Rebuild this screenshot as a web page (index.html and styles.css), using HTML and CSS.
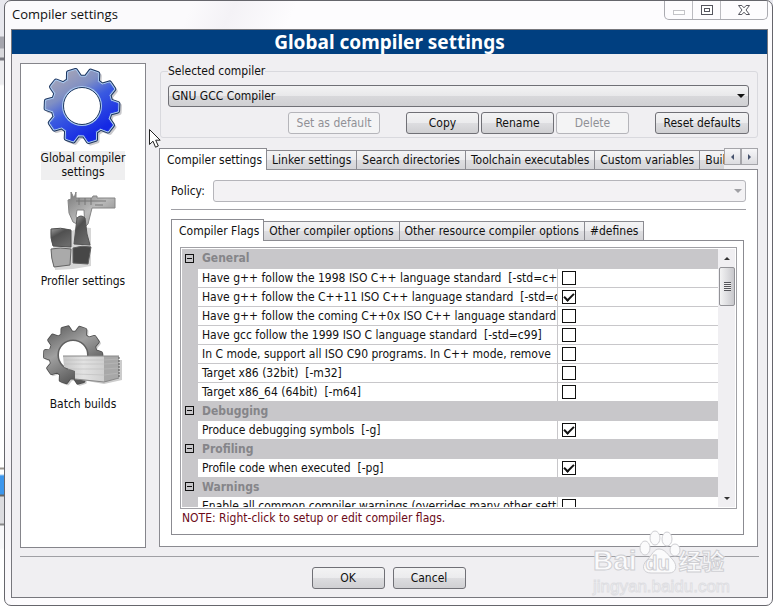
FILE: index.html
```html
<!DOCTYPE html>
<html lang="en">
  <head>
    <meta charset="UTF-8" />
    <meta name="viewport" content="width=device-width, initial-scale=1.0" />
    <title>Compiler settings</title>
    <link rel="stylesheet" href="styles.css">
  </head>

  <body>
    <div class="window">
      <div class="title-bar">
        <div class="title">Compiler settings</div>
        <div class="window-buttons">
          <button class="window-button" aria-label="Minimize" disabled>
            <svg width="14" height="16" viewBox="0 0 14 16"><rect x="1.5" y="8.5" width="11" height="4" fill="#fff" stroke="#c4c4c8" /></svg>
          </button>
          <button class="window-button" aria-label="Maximize">
            <svg width="14" height="16" viewBox="0 0 14 16"><g fill="#fff" stroke="#55555e"><rect x="1.5" y="3.5" width="11" height="9" /><rect x="4.5" y="6.5" width="5" height="3" /></g></svg>
          </button>
          <button class="window-button close" aria-label="Close">
            <svg width="14" height="16" viewBox="0 0 14 16"><path d="M1.500 3.500h3.400L7 5.800l2.100-2.300h3.400L9 8l3.500 4.500H9.100L7 10.200 4.900 12.500H1.500L5 8z" fill="#fff" stroke="#55555e" /></svg>
          </button>
        </div>
      </div>

      <div class="client">
        <h1 class="banner">Global compiler settings</h1>
        <div class="main">
          <ul class="categories">
            <li>
              <a class="category selected" href="#global">
                <svg width="80" height="80" viewBox="-39 -39 80 80">
                  <defs>
                    <linearGradient id="blue" gradientUnits="userSpaceOnUse" x1="-20" y1="-32" x2="14" y2="26">
                      <stop offset="0" stop-color="#a4a4b8" />
                      <stop offset="0.3" stop-color="#7f8fc4" />
                      <stop offset="0.55" stop-color="#3a5ae0" />
                      <stop offset="1" stop-color="#1428e4" />
                    </linearGradient>
                    <linearGradient id="grey" gradientUnits="userSpaceOnUse" x1="-20" y1="-32" x2="14" y2="26">
                      <stop offset="0" stop-color="#6c6c6c" />
                      <stop offset="0.4" stop-color="#a0a0a0" />
                      <stop offset="1" stop-color="#585858" />
                    </linearGradient>
                    <path id="gear" stroke-linejoin="round" d="M4-28.700 8.700-34.900 15.800-32.400 15.400-24.600 20.100-20.900 27.600-23.100 31.800-16.900 26.900-10.900 28.600-5 35.900-2.500 35.600 5 28.100 7 26.100 12.700 30.500 19.100 25.900 25 18.600 22.200 13.600 25.600 13.500 33.400 6.300 35.500 2 28.900-4 28.700-8.700 34.900-15.800 32.400-15.400 24.600-20.100 20.900-27.600 23.100-31.800 16.900-26.900 10.900-28.600 5-35.900 2.500-35.600-5-28.100-7-26.100-12.700-30.500-19.100-25.900-25-18.600-22.200-13.600-25.600-13.500-33.400-6.300-35.500-2-28.900z" />
                  </defs>
                  <use href="#gear" x="2" y="2" fill="#c8c8cc" stroke="#c8c8cc" stroke-width="4" />
                  <use href="#gear" fill="#1c3560" stroke="#1c3560" stroke-width="5" />
                  <use href="#gear" fill="#a9c8ee" stroke="#a9c8ee" stroke-width="3" />
                  <use href="#gear" fill="url(#blue)" stroke="url(#blue)" stroke-width="1" />
                  <circle r="20" fill="#a9c8ee" />
                  <circle r="18.500" fill="#fff" stroke="#1c3560" />
                </svg>
                <span>Global compiler<br />settings</span>
              </a>
            </li>
            <li>
              <a class="category" href="#profiler">
                <svg width="80" height="80" viewBox="0 0 80 80">
                  <defs>
                    <linearGradient id="steel" x1="0" y1="0" x2="1" y2="1">
                      <stop offset="0" stop-color="#777" />
                      <stop offset="0.5" stop-color="#bbb" />
                      <stop offset="1" stop-color="#808080" />
                    </linearGradient>
                    <linearGradient id="dark" x1="0" y1="0" x2="0.6" y2="1">
                      <stop offset="0" stop-color="#a0a0a0" />
                      <stop offset="0.4" stop-color="#505050" />
                      <stop offset="1" stop-color="#6a6a6a" />
                    </linearGradient>
                  </defs>
                  <path d="M9 40l20 1 8-4 11 1v38l-18 3-18 1z" fill="#d6d6d6" />
                  <path d="M28 2l3 6 2-6v6h16l1-2h4v2h18v10H49l-4 16-3 3-1-17H34l-1 6 3 9-6-3-4-9-1-13 3-1z" fill="url(#steel)" stroke="#858585" />
                  <path d="M33 11h30M52 15h8M36 8v7M42 8v7M48 8v7" stroke="#777" fill="none" />
                  <path d="M34 28q4-4 8 0l2 16 3 11-16-1z" fill="url(#dark)" stroke="#555" />
                  <path d="M8 39q9-2 20 1v17l-18-1q-3-8-2-17z" fill="url(#dark)" stroke="#505050" />
                  <path d="M8 59q9-2 20 0l-1 16-16 2q-3-9-3-18z" fill="#aaa" stroke="#646464" />
                  <path d="M30 58q9-3 18-1l-3 17-15-1z" fill="#474747" stroke="#606060" />
                </svg>
                <span>Profiler settings</span>
              </a>
            </li>
            <li>
              <a class="category" href="#batch">
                <svg width="80" height="80" viewBox="0 0 80 80">
                  <defs>
                    <linearGradient id="paper" x1="0" y1="0" x2="1" y2="0">
                      <stop offset="0" stop-color="#c6c6c6" />
                      <stop offset="0.5" stop-color="#e2e2e2" />
                      <stop offset="1" stop-color="#cfcfcf" />
                    </linearGradient>
                  </defs>
                  <g transform="translate(30 42) scale(0.780)">
                    <use href="#gear" x="2" y="2" fill="#ccc" stroke="#ccc" stroke-width="4" />
                    <use href="#gear" fill="#4c4c4c" stroke="#4c4c4c" stroke-width="5" />
                    <use href="#gear" fill="url(#grey)" stroke="url(#grey)" stroke-width="3" />
                    <circle r="19" fill="#fff" stroke="#606060" stroke-width="2" />
                  </g>
                  <path d="M33 66l28 5 18-4v-20h-3z" fill="#ccc" />
                  <path d="M20 43h41v25l-29-2v-8l-11-4z" fill="url(#paper)" />
                  <path d="M61 43h15v22l-15 4z" fill="#a8a8a8" />
                  <path d="M21 47h40l15-1M21 51h40l15-1M25 56h36l15-1M32 61l29 1 15-2" fill="none" stroke="#bcbcbc" stroke-width="0.600" />
                  <path d="M20 43h56M32 66l29 3 15-4" fill="none" stroke="#888" />
                  <path d="M76 44v21" fill="none" stroke="#555" stroke-dasharray="2 1" />
                </svg>
                <span>Batch builds</span>
              </a>
            </li>
          </ul>

          <div class="settings">
            <fieldset class="compiler">
              <legend><label for="compiler">Selected compiler</label></legend>
              <div class="combo">
                <select id="compiler"><option>GNU GCC Compiler</option></select>
              </div>
              <div class="compiler-actions">
                <button class="button default" disabled>Set as default</button>
                <button class="button">Copy</button>
                <button class="button">Rename</button>
                <button class="button" disabled>Delete</button>
                <button class="button reset">Reset defaults</button>
              </div>
            </fieldset>

            <div class="tab-row">
              <div class="tabs" role="tablist">
                <button class="tab active" role="tab">Compiler settings</button>
                <button class="tab" role="tab">Linker settings</button>
                <button class="tab" role="tab">Search directories</button>
                <button class="tab" role="tab">Toolchain executables</button>
                <button class="tab" role="tab">Custom variables</button>
                <button class="tab" role="tab">Build options</button>
              </div>
              <button class="tab-scroll" aria-label="Previous tabs"><span class="arrow left"></span></button>
              <button class="tab-scroll" aria-label="Next tabs"><span class="arrow right"></span></button>
            </div>

            <div class="panel">
              <div class="policy">
                <label for="policy">Policy:</label>
                <div class="combo disabled"><select id="policy" disabled></select></div>
              </div>
              <hr />
              <div class="tabs inner" role="tablist">
                <button class="tab active" role="tab">Compiler Flags</button>
                <button class="tab" role="tab">Other compiler options</button>
                <button class="tab" role="tab">Other resource compiler options</button>
                <button class="tab" role="tab">#defines</button>
              </div>
              <div class="flags-panel">
                <div class="flags">
                  <div class="flags-view">
                    <table>
                      <colgroup><col class="col-gutter" /><col class="col-name" /><col /></colgroup>
                      <tr class="group"><td><button class="toggle" aria-label="Collapse General"></button></td><th colspan="2">General</th></tr>
                      <tr><td></td><td><label for="f1">Have g++ follow the 1998 ISO C++ language standard&nbsp; [-std=c++98]</label></td><td><input id="f1" type="checkbox" /></td></tr>
                      <tr><td></td><td><label for="f2">Have g++ follow the C++11 ISO C++ language standard&nbsp; [-std=c++11]</label></td><td><input id="f2" type="checkbox" checked /></td></tr>
                      <tr><td></td><td><label for="f3">Have g++ follow the coming C++0x ISO C++ language standard&nbsp; [-std=c++0x]</label></td><td><input id="f3" type="checkbox" /></td></tr>
                      <tr><td></td><td><label for="f4">Have gcc follow the 1999 ISO C language standard&nbsp; [-std=c99]</label></td><td><input id="f4" type="checkbox" /></td></tr>
                      <tr><td></td><td><label for="f5">In C mode, support all ISO C90 programs. In C++ mode, remove</label></td><td><input id="f5" type="checkbox" /></td></tr>
                      <tr><td></td><td><label for="f6">Target x86 (32bit)&nbsp; [-m32]</label></td><td><input id="f6" type="checkbox" /></td></tr>
                      <tr><td></td><td><label for="f7">Target x86_64 (64bit)&nbsp; [-m64]</label></td><td><input id="f7" type="checkbox" /></td></tr>
                      <tr class="group"><td><button class="toggle" aria-label="Collapse Debugging"></button></td><th colspan="2">Debugging</th></tr>
                      <tr><td></td><td><label for="f8">Produce debugging symbols&nbsp; [-g]</label></td><td><input id="f8" type="checkbox" checked /></td></tr>
                      <tr class="group"><td><button class="toggle" aria-label="Collapse Profiling"></button></td><th colspan="2">Profiling</th></tr>
                      <tr><td></td><td><label for="f9">Profile code when executed&nbsp; [-pg]</label></td><td><input id="f9" type="checkbox" checked /></td></tr>
                      <tr class="group"><td><button class="toggle" aria-label="Collapse Warnings"></button></td><th colspan="2">Warnings</th></tr>
                      <tr><td></td><td><label for="f10">Enable all common compiler warnings (overrides many other settings)</label></td><td><input id="f10" type="checkbox" /></td></tr>
                    </table>
                  </div>
                  <div class="scrollbar">
                    <button class="scroll-button" aria-label="Scroll up"><span class="arrow up"></span></button>
                    <div class="thumb"><span class="grip"></span></div>
                    <button class="scroll-button" aria-label="Scroll down"><span class="arrow down"></span></button>
                  </div>
                </div>
                <p class="note">NOTE: Right-click to setup or edit compiler flags.</p>
              </div>
            </div>
          </div>
        </div>
        <hr class="footer-line" />
        <div class="footer">
          <button class="button">OK</button>
          <button class="button">Cancel</button>
        </div>
      </div>
    </div>

    <svg class="pointer" width="14" height="22" viewBox="0 0 14 22"><path d="M1.500 1.500v15l3.500-3.300 2.500 6 2.800-1.200-2.600-5.800h4.500z" fill="#fff" stroke="#222" /></svg>

    <div class="watermark">
      <svg width="42" height="44" viewBox="0 0 42 44"><g fill="#fbfbfc" stroke="#cfcfd3"><ellipse cx="16" cy="8" rx="5" ry="7" /><ellipse cx="28" cy="9" rx="5" ry="7" /><ellipse cx="6" cy="18" rx="5" ry="7" /><ellipse cx="36" cy="20" rx="5" ry="6" /><path d="M20 19c6 0 9 6 14 11 5 6 3 13-4 13H12c-8 0-10-7-4-13 5-5 7-11 12-11z" /></g></svg>
      <div class="brand"><span>Bai</span><span class="du">du</span><span lang="zh" class="cjk">经验</span></div>
      <div class="site">jingyan.baidu.com</div>
    </div>
  </body>
</html>
```

FILE: styles.css
```css
* {
  box-sizing: border-box;
}

body {
  margin: 0;
  height: 100vh;
  padding: 0 0 7px 4px;
  overflow: hidden;
  position: relative;
  font-family: "DejaVu Sans Condensed", "DejaVu Sans", sans-serif;
  font-stretch: condensed;
  font-size: 12px;
  line-height: 14px;
  color: #111;
  background: linear-gradient(
    to bottom,
    #e8e8ee 0 36px,
    #a5a5ad 37px 48px,
    #d8d8dc 49px 57px,
    #77777f 58px 60px,
    #ededf0 61px 84px,
    #fff 86px 467px,
    #9a9590 468px 469px,
    #fff 470px 474px,
    #3d96ec 476px 494px,
    #666 495px 496px,
    #dcdce0 497px 523px,
    #888 524px 525px,
    #f8f8fa 526px 548px,
    #fff 550px
  );
}

button,
select {
  font: inherit;
  color: inherit;
}

.window {
  height: 100%;
  display: flex;
  flex-direction: column;
  padding: 0 4px 7px 6px;
  border: 1px solid #66666c;
  border-radius: 7px;
  background: linear-gradient(115deg, #fbfafc 0 18%, #f4f2f6 22%, #fdfcfe 28% 100%);
}

.title-bar {
  height: 28px;
  display: flex;
  justify-content: space-between;
}

.title {
  padding: 5px 1px;
  font-family: "Open Sans", "Noto Sans", sans-serif;
  font-stretch: normal;
  font-size: 13px;
  line-height: 16px;
}

.window-buttons {
  display: flex;
  height: 19px;
  border: 1px solid #aaaab0;
  border-top: 0;
  border-radius: 0 0 5px 5px;
}

.window-button {
  width: 28px;
  padding: 0;
  border: 0;
  border-right: 1px solid #bbbbc0;
  background: none;
}

.window-button.close {
  width: 46px;
  border-right: 0;
}

.window-button svg {
  display: block;
  margin: auto;
}

.client {
  flex: 1;
  min-height: 0;
  display: flex;
  flex-direction: column;
  border: 1px solid #77777d;
  background: #f0eff2;
}

.banner {
  margin: 0;
  height: 24px;
  font-family: "Noto Sans", "Open Sans", sans-serif;
  font-stretch: normal;
  font-size: 19px;
  line-height: 24px;
  text-align: center;
  color: #fff;
  background: #003f80;
}

.main {
  flex: 1;
  min-height: 0;
  display: flex;
  gap: 14px;
  padding: 9px 9px 8px 8px;
}

.categories {
  width: 126px;
  margin: 0;
  padding: 3px 0;
  list-style: none;
  border: 1px solid #85858b;
  background: #fff;
}

.category {
  display: flex;
  flex-direction: column;
  align-items: center;
  gap: 4px;
  min-height: 123px;
  text-align: center;
  color: inherit;
  text-decoration: none;
}

.category span {
  padding-bottom: 1px;
}

.selected span {
  background: #efeff0;
}

.settings {
  flex: 1;
  min-width: 0;
  display: flex;
  flex-direction: column;
  padding: 1px 0;
}

.compiler {
  min-width: 0;
  margin: 0;
  padding: 7px 8px 3px 7px;
  border: 1px solid #d9d9de;
  border-radius: 3px;
}

.compiler legend {
  padding: 0;
}

.combo {
  display: grid;
  align-items: center;
}

.combo select {
  grid-area: 1 / 1;
  height: 22px;
  padding: 0 3px;
  appearance: none;
  border: 1px solid #707076;
  border-radius: 3px;
  color: #111;
  background: linear-gradient(#f3f3f4, #e8e8ea 50%, #d8d8db 51%, #d0d0d3);
}

.combo::after {
  content: "";
  grid-area: 1 / 1;
  justify-self: end;
  margin-right: 4px;
  border: 4px solid transparent;
  border-top-color: #111;
  border-bottom: 0;
  pointer-events: none;
}

.combo.disabled select {
  border-color: #b5b5ba;
  background: #f3f2f4;
  opacity: 1;
}

.combo.disabled::after {
  border-top-color: #a0a0a4;
}

.compiler-actions {
  display: flex;
  justify-content: flex-end;
  gap: 2px;
  padding: 5px 0 0;
}

.button {
  width: 73px;
  height: 22px;
  padding: 0;
  border: 1px solid #707076;
  border-radius: 3px;
  background: linear-gradient(#f3f3f4, #ebebed 50%, #dddde0 51%, #cfcfd2);
}

.button:disabled {
  color: #909096;
  border-color: #b5b5ba;
  background: #f4f4f5;
}

.button.default {
  width: 92px;
  margin-right: 24px;
}

.button.reset {
  width: 94px;
  margin-left: 24px;
}

.tab-row {
  display: flex;
  margin: 10px 0 0 -1px;
}

.tabs {
  flex: 1;
  min-width: 0;
  display: flex;
  align-items: flex-end;
  height: 22px;
  overflow: hidden;
  z-index: 1;
}

.tabs.inner {
  flex: none;
}

.tab {
  flex: none;
  height: 20px;
  padding: 0 5px;
  white-space: nowrap;
  border: 1px solid #8b8b91;
  border-left-width: 0;
  background: linear-gradient(#f4f4f5, #ececee 50%, #dedee1 51%, #d4d4d7);
}

.tab.active {
  height: 22px;
  padding: 0 4px 0 7px;
  border-left-width: 1px;
  border-bottom: 0;
  background: #fff;
}

.tab-scroll {
  width: 17px;
  height: 17px;
  padding: 0;
  display: grid;
  place-items: center;
  border: 1px solid #a5a5aa;
  background: linear-gradient(#f6f6f8, #dcdce0);
}

.arrow {
  border: 3px solid transparent;
}

.arrow.left {
  border-right-color: #46536e;
  border-left: 0;
}

.arrow.right {
  border-left-color: #46536e;
  border-right: 0;
}

.arrow.up {
  border-bottom-color: #333;
  border-top: 0;
}

.arrow.down {
  border-top-color: #333;
  border-bottom: 0;
}

.panel {
  flex: 1;
  min-height: 0;
  display: flex;
  flex-direction: column;
  margin: -1px 0 0 -1px;
  padding: 10px 11px 11px;
  border: 1px solid #8b8b91;
  background: #fff;
}

.policy {
  display: flex;
  align-items: center;
  gap: 8px;
}

.policy .combo {
  flex: 1;
}

hr {
  width: 100%;
  margin: 7px 0 9px;
  border: 0;
  border-top: 1px solid #a0a0a5;
}

.flags-panel {
  flex: 1;
  min-height: 0;
  display: flex;
  flex-direction: column;
  margin: -1px 2px 0 0;
  padding: 6px 6px 9px 8px;
  border: 1px solid #8b8b91;
}

.flags {
  flex: 1;
  min-height: 0;
  display: flex;
  padding: 1px;
  border: 1px solid #a0a0a5;
}

.flags-view {
  flex: 1;
  min-width: 0;
  overflow: hidden;
}

table {
  width: 100%;
  table-layout: fixed;
  border-collapse: collapse;
}

.col-gutter {
  width: 16px;
}

.col-name {
  width: 359px;
}

td,
th {
  height: 19px;
  padding: 0 4px;
  overflow: hidden;
  white-space: nowrap;
  text-align: left;
  border-bottom: 1px solid #c8c7ca;
}

td:nth-child(2) {
  padding-right: 0;
  border-right: 1px solid #c8c7ca;
}

td:first-child,
.group {
  padding: 0;
  background: #c8c7ca;
}

th {
  color: #858589;
}

label {
  display: block;
}

.toggle {
  display: block;
  width: 9px;
  height: 9px;
  margin-left: 3px;
  padding: 0;
  border: 1px solid #111;
  background: linear-gradient(#111, #111) center / 5px 1px no-repeat;
}

input[type="checkbox"] {
  display: grid;
  place-items: center;
  width: 14px;
  height: 14px;
  margin: 0;
  appearance: none;
  border: 1px solid #111;
  background: #fff;
}

input[type="checkbox"]:checked::before {
  content: "";
  width: 8px;
  height: 4px;
  border: solid #111;
  border-width: 0 0 2px 2px;
  transform: translateY(-1px) rotate(-45deg);
}

.scrollbar {
  width: 17px;
  display: flex;
  flex-direction: column;
  padding-left: 1px;
  background: #f0eff2;
}

.scroll-button {
  height: 18px;
  padding: 0;
  display: grid;
  place-items: center;
  border: 0;
  background: none;
}

.thumb {
  height: 39px;
  margin-bottom: auto;
  display: grid;
  place-items: center;
  border: 1px solid #929297;
  border-radius: 2px;
  background: linear-gradient(to right, #f3f3f4, #dedee1 50%, #c8c8cc);
}

.grip {
  width: 7px;
  height: 9px;
  background: repeating-linear-gradient(#55555a 0 1px, #eee 1px 2px);
}

.note {
  margin: 2px 0 0 2px;
  color: #6b0a18;
}

.footer-line {
  width: auto;
  margin: 0 8px 10px;
}

.footer {
  display: flex;
  justify-content: center;
  gap: 8px;
  padding: 0 2px 8px 0;
}

.pointer {
  position: absolute;
  left: 148px;
  top: 128px;
}

.watermark {
  position: absolute;
  left: 593px;
  top: 530px;
  width: 140px;
  color: #fbfbfc;
  font-family: "Liberation Sans", sans-serif;
  font-stretch: normal;
  -webkit-text-stroke: 1px #cfcfd3;
}

.watermark svg {
  position: absolute;
  left: 46px;
  top: 0;
}

.brand {
  position: relative;
  display: flex;
  align-items: baseline;
  padding-top: 16px;
  font-size: 28px;
  line-height: 28px;
  font-weight: bold;
}

.brand .du {
  width: 42px;
  font-size: 20px;
  text-align: center;
}

.brand .cjk {
  font-family: "Noto Sans CJK SC", sans-serif;
  font-size: 23px;
}

.site {
  font-size: 17px;
  line-height: 20px;
  -webkit-text-stroke: 1px #dedee2;
}
```
